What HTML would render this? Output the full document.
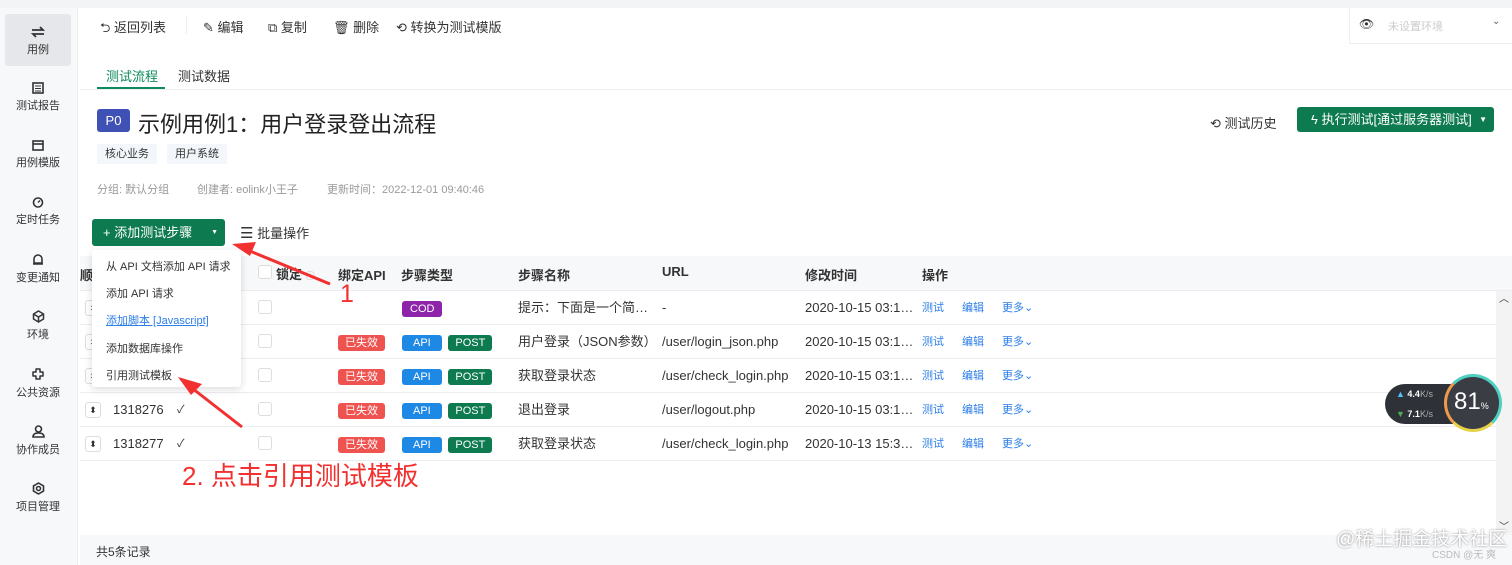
<!DOCTYPE html>
<html><head><meta charset="utf-8"><style>
*{margin:0;padding:0;box-sizing:border-box}
body{width:1512px;height:565px;overflow:hidden;background:#fff;font-family:"Liberation Sans","Noto Sans CJK SC",sans-serif;color:#333;position:relative;font-size:13px}
.a{position:absolute;white-space:nowrap}
.side{left:0;top:8px;width:78px;height:557px;background:#f7f8fa;border-right:1px solid #eee}
.si{position:absolute;left:5px;width:66px;text-align:center;font-size:11px;color:#333}
.si svg{display:block;margin:0 auto 3px}
.tag{display:inline-block;font-size:11px;color:#fff;border-radius:3px;padding:0 7px;height:16px;line-height:16px}
.row{position:absolute;left:80px;width:1416px;height:34px;border-bottom:1px solid #ebedf0}
.c{position:absolute;top:0;height:34px;line-height:34px;font-size:13px;color:#333;white-space:nowrap}
.cb{position:absolute;width:14px;height:14px;border:1px solid #ddd;border-radius:3px}
.hd{position:absolute;left:5px;top:9px;width:16px;height:16px;border:1px solid #ddd;border-radius:3px;font-size:9px;line-height:14px;text-align:center}
.lnk{color:#2b7de9;font-size:11px}
</style></head><body>
<div class="a" style="left:0;top:0;width:1512px;height:8px;background:#f3f4f6"></div>
<div class="a side">
 <div class="si" style="top:6px;height:52px;background:#e6e7ea;border-radius:3px;padding-top:12px"><svg width="14" height="12" viewBox="0 0 14 12"><path d="M1 4h11l-3-3M13 8H2l3 3" stroke="#333" stroke-width="1.8" fill="none"/></svg>用例</div>
 <div class="si" style="top:74px"><svg width="12" height="12"><rect x="1" y="1" width="10" height="10" fill="none" stroke="#333" stroke-width="1.6"/><path d="M3 4h6M3 6.5h6M3 9h6" stroke="#333"/></svg>测试报告</div>
 <div class="si" style="top:131px"><svg width="12" height="12"><rect x="1" y="2" width="10" height="9" fill="none" stroke="#333" stroke-width="1.6"/><path d="M1 5h10" stroke="#333" stroke-width="1.6"/></svg>用例模版</div>
 <div class="si" style="top:188px"><svg width="12" height="12"><circle cx="6" cy="6.5" r="4.5" fill="none" stroke="#333" stroke-width="1.6"/><path d="M6 6.5l2-2" stroke="#333" stroke-width="1.4"/></svg>定时任务</div>
 <div class="si" style="top:245px"><svg width="12" height="13"><path d="M2 10V6a4 4 0 0 1 8 0v4zM1 11h10" fill="none" stroke="#333" stroke-width="1.6"/></svg>变更通知</div>
 <div class="si" style="top:302px"><svg width="13" height="13"><path d="M6.5 1l5 3v5l-5 3-5-3V4z M1.5 4l5 3 5-3M6.5 7v5" fill="none" stroke="#333" stroke-width="1.5"/></svg>环境</div>
 <div class="si" style="top:359px"><svg width="14" height="14"><path d="M5 2h4v3h3v4h-3v3H5v-3H2V5h3z" fill="none" stroke="#333" stroke-width="1.5" stroke-linejoin="round"/></svg>公共资源</div>
 <div class="si" style="top:417px"><svg width="13" height="13"><circle cx="6.5" cy="4" r="3" fill="none" stroke="#333" stroke-width="1.6"/><path d="M1 12c0-3 2.5-4 5.5-4s5.5 1 5.5 4z" fill="none" stroke="#333" stroke-width="1.6"/></svg>协作成员</div>
 <div class="si" style="top:474px"><svg width="13" height="13"><path d="M6.5 1l5 3v5l-5 3-5-3V4z" fill="none" stroke="#333" stroke-width="1.6"/><circle cx="6.5" cy="6.5" r="2" fill="none" stroke="#333" stroke-width="1.5"/></svg>项目管理</div>
</div>

<div class="a" style="left:1349px;top:8px;width:163px;height:36px;border-left:1px solid #eee;border-bottom:1px solid #eee"></div>
<div class="a" style="left:1359px;top:17px;font-size:12px">👁</div>
<div class="a" style="left:1388px;top:18px;font-size:11px;color:#ccc">未设置环境</div>
<div class="a" style="left:1492px;top:16px;font-size:10px;color:#666">⌄</div>

<div class="a" style="left:100px;top:17px;font-size:13px">⮌ 返回列表</div>
<div class="a" style="left:186px;top:16px;width:1px;height:18px;background:#eee"></div>
<div class="a" style="left:203px;top:17px;font-size:13px">✎ 编辑</div>
<div class="a" style="left:268px;top:17px;font-size:13px">⧉ 复制</div>
<div class="a" style="left:333px;top:17px;font-size:13px">🗑 删除</div>
<div class="a" style="left:396px;top:17px;font-size:13px">⟲ 转换为测试模版</div>

<div class="a" style="left:106px;top:66px;font-size:13px;color:#0d8a5b">测试流程</div>
<div class="a" style="left:97px;top:87px;width:68px;height:2px;background:#0d8a5b"></div>
<div class="a" style="left:178px;top:66px;font-size:13px">测试数据</div>
<div class="a" style="left:80px;top:89px;width:1432px;height:1px;background:#eee"></div>

<div class="a" style="left:97px;top:109px;width:33px;height:23px;background:#3f51b5;color:#fff;border-radius:3px;text-align:center;line-height:23px;font-size:13px">P0</div>
<div class="a" style="left:138px;top:107px;font-size:22px;color:#222">示例用例1：用户登录登出流程</div>
<div class="a" style="left:97px;top:144px;height:20px;line-height:20px;padding:0 8px;background:#f3f6fa;font-size:11px;border-radius:2px">核心业务</div>
<div class="a" style="left:167px;top:144px;height:20px;line-height:20px;padding:0 8px;background:#f3f6fa;font-size:11px;border-radius:2px">用户系统</div>
<div class="a" style="left:97px;top:181px;font-size:11px;color:#999">分组: 默认分组</div>
<div class="a" style="left:197px;top:181px;font-size:11px;color:#999">创建者: eolink小王子</div>
<div class="a" style="left:327px;top:181px;font-size:11px;color:#999">更新时间：2022-12-01 09:40:46</div>

<div class="a" style="left:1210px;top:113px;font-size:13px">⟲ 测试历史</div>
<div class="a" style="left:1297px;top:107px;width:197px;height:25px;background:#0d7a50;border-radius:3px;color:#fff;font-size:13px;line-height:25px;padding-left:14px">ϟ 执行测试[通过服务器测试]<span style="position:absolute;right:7px;font-size:8px">▼</span></div>

<div class="a" style="left:92px;top:219px;width:133px;height:27px;background:#0d7a50;border-radius:3px;color:#fff;font-size:13px;line-height:27px;padding-left:11px">+ 添加测试步骤<span style="position:absolute;right:7px;font-size:7px">▼</span></div>
<div class="a" style="left:240px;top:223px;font-size:13px"><span style="font-size:15px">☰</span> 批量操作</div>

<div class="a" style="left:80px;top:256px;width:1432px;height:35px;background:#f7f8fa;border-bottom:1px solid #ebedf0;font-weight:bold;font-size:13px">
 <span class="a" style="left:0;top:9px">顺</span>
 <div class="cb" style="left:178px;top:9px;background:#fff"></div>
 <span class="a" style="left:196px;top:8px">锁定 <span style="font-weight:normal;font-size:9px;color:#999">ⓘ</span></span>
 <span class="a" style="left:258px;top:9px">绑定API</span>
 <span class="a" style="left:321px;top:9px">步骤类型</span>
 <span class="a" style="left:438px;top:9px">步骤名称</span>
 <span class="a" style="left:582px;top:8px">URL</span>
 <span class="a" style="left:725px;top:9px">修改时间</span>
 <span class="a" style="left:842px;top:9px">操作</span>
</div>

<div class="row" style="top:291px"><div class="hd">⬍</div><div class="cb" style="left:178px;top:9px"></div><span class="c" style="left:322px"><span class="tag" style="background:#8e24aa;padding:0 8px">COD</span></span><span class="c" style="left:438px">提示：下面是一个简…</span><span class="c" style="left:582px">-</span><span class="c" style="left:725px">2020-10-15 03:1…</span><span class="c lnk" style="left:842px">测试</span><span class="c lnk" style="left:882px">编辑</span><span class="c lnk" style="left:922px">更多⌄</span></div>
<div class="row" style="top:325px"><div class="hd">⬍</div><div class="cb" style="left:178px;top:9px"></div><span class="c" style="left:258px"><span class="tag" style="background:#ef5350">已失效</span></span><span class="c" style="left:322px"><span class="tag" style="background:#1e88e5;padding:0 11px">API</span> <span class="tag" style="background:#0d7a50;margin-left:3px">POST</span></span><span class="c" style="left:438px">用户登录（JSON参数）</span><span class="c" style="left:582px">/user/login_json.php</span><span class="c" style="left:725px">2020-10-15 03:1…</span><span class="c lnk" style="left:842px">测试</span><span class="c lnk" style="left:882px">编辑</span><span class="c lnk" style="left:922px">更多⌄</span></div>
<div class="row" style="top:359px"><div class="hd">⬍</div><div class="cb" style="left:178px;top:9px"></div><span class="c" style="left:258px"><span class="tag" style="background:#ef5350">已失效</span></span><span class="c" style="left:322px"><span class="tag" style="background:#1e88e5;padding:0 11px">API</span> <span class="tag" style="background:#0d7a50;margin-left:3px">POST</span></span><span class="c" style="left:438px">获取登录状态</span><span class="c" style="left:582px">/user/check_login.php</span><span class="c" style="left:725px">2020-10-15 03:1…</span><span class="c lnk" style="left:842px">测试</span><span class="c lnk" style="left:882px">编辑</span><span class="c lnk" style="left:922px">更多⌄</span></div>
<div class="row" style="top:393px"><div class="hd">⬍</div><span class="c" style="left:33px">1318276</span><span class="c" style="left:97px;font-size:11px">✓</span><div class="cb" style="left:178px;top:9px"></div><span class="c" style="left:258px"><span class="tag" style="background:#ef5350">已失效</span></span><span class="c" style="left:322px"><span class="tag" style="background:#1e88e5;padding:0 11px">API</span> <span class="tag" style="background:#0d7a50;margin-left:3px">POST</span></span><span class="c" style="left:438px">退出登录</span><span class="c" style="left:582px">/user/logout.php</span><span class="c" style="left:725px">2020-10-15 03:1…</span><span class="c lnk" style="left:842px">测试</span><span class="c lnk" style="left:882px">编辑</span><span class="c lnk" style="left:922px">更多⌄</span></div>
<div class="row" style="top:427px"><div class="hd">⬍</div><span class="c" style="left:33px">1318277</span><span class="c" style="left:97px;font-size:11px">✓</span><div class="cb" style="left:178px;top:9px"></div><span class="c" style="left:258px"><span class="tag" style="background:#ef5350">已失效</span></span><span class="c" style="left:322px"><span class="tag" style="background:#1e88e5;padding:0 11px">API</span> <span class="tag" style="background:#0d7a50;margin-left:3px">POST</span></span><span class="c" style="left:438px">获取登录状态</span><span class="c" style="left:582px">/user/check_login.php</span><span class="c" style="left:725px">2020-10-13 15:3…</span><span class="c lnk" style="left:842px">测试</span><span class="c lnk" style="left:882px">编辑</span><span class="c lnk" style="left:922px">更多⌄</span></div>

<div class="a" style="left:1496px;top:291px;width:16px;height:244px;background:#f3f3f3"></div>
<div class="a" style="left:1499px;top:290px;font-size:10px">︿</div>
<div class="a" style="left:1499px;top:518px;font-size:10px">﹀</div>
<div class="a" style="left:80px;top:535px;width:1432px;height:30px;background:#f7f8fa"></div>
<div class="a" style="left:96px;top:543px;font-size:12px">共5条记录</div>

<div class="a" style="left:92px;top:250px;width:149px;height:137px;background:#fff;box-shadow:0 2px 8px rgba(0,0,0,.15);border-radius:3px;font-size:11px">
 <div class="a" style="left:14px;top:8px">从 API 文档添加 API 请求</div>
 <div class="a" style="left:14px;top:35px">添加 API 请求</div>
 <div class="a" style="left:14px;top:62px;color:#2b7de9;text-decoration:underline">添加脚本 [Javascript]</div>
 <div class="a" style="left:14px;top:90px">添加数据库操作</div>
 <div class="a" style="left:14px;top:117px">引用测试模板</div>
</div>

<div class="a" style="left:1385px;top:384px;width:95px;height:40px;background:#2e3238;border-radius:20px"></div>
<div class="a" style="left:1396px;top:389px;font-size:9px;color:#fff;font-weight:bold"><span style="color:#4fc3f7">▲</span> 4.4<span style="font-weight:normal;color:#aaa">K/s</span></div>
<div class="a" style="left:1396px;top:409px;font-size:9px;color:#fff;font-weight:bold"><span style="color:#4caf50">▼</span> 7.1<span style="font-weight:normal;color:#aaa">K/s</span></div>
<div class="a" style="left:1444px;top:374px;width:58px;height:58px;border-radius:50%;background:#3a3e44;border:3px solid #4dd0c0;border-left-color:#ef9a4a;border-bottom-color:#e6d24a"></div>
<div class="a" style="left:1454px;top:388px;font-size:24px;color:#fff">81<span style="font-size:9px">%</span></div>

<svg class="a" style="left:0;top:0" width="1512" height="565">
 <path d="M330 284L245 249" stroke="#f23030" stroke-width="3"/>
 <path d="M232 244L256 242L250 256Z" fill="#f23030"/>
 <path d="M242 427L188 385" stroke="#f23030" stroke-width="3"/>
 <path d="M178 377L202 384L191 395Z" fill="#f23030"/>
</svg>
<div class="a" style="left:340px;top:280px;font-size:25px;color:#f23030">1</div>
<div class="a" style="left:182px;top:456px;font-size:26px;color:#f23030">2. 点击引用测试模板</div>

<div class="a" style="left:1336px;top:524px;font-size:19px;color:#fff;text-shadow:0 0 2px #888">@稀土掘金技术社区</div>
<div class="a" style="left:1432px;top:546px;font-size:10px;color:#bbb">CSDN @无 爽</div>
</body></html>
